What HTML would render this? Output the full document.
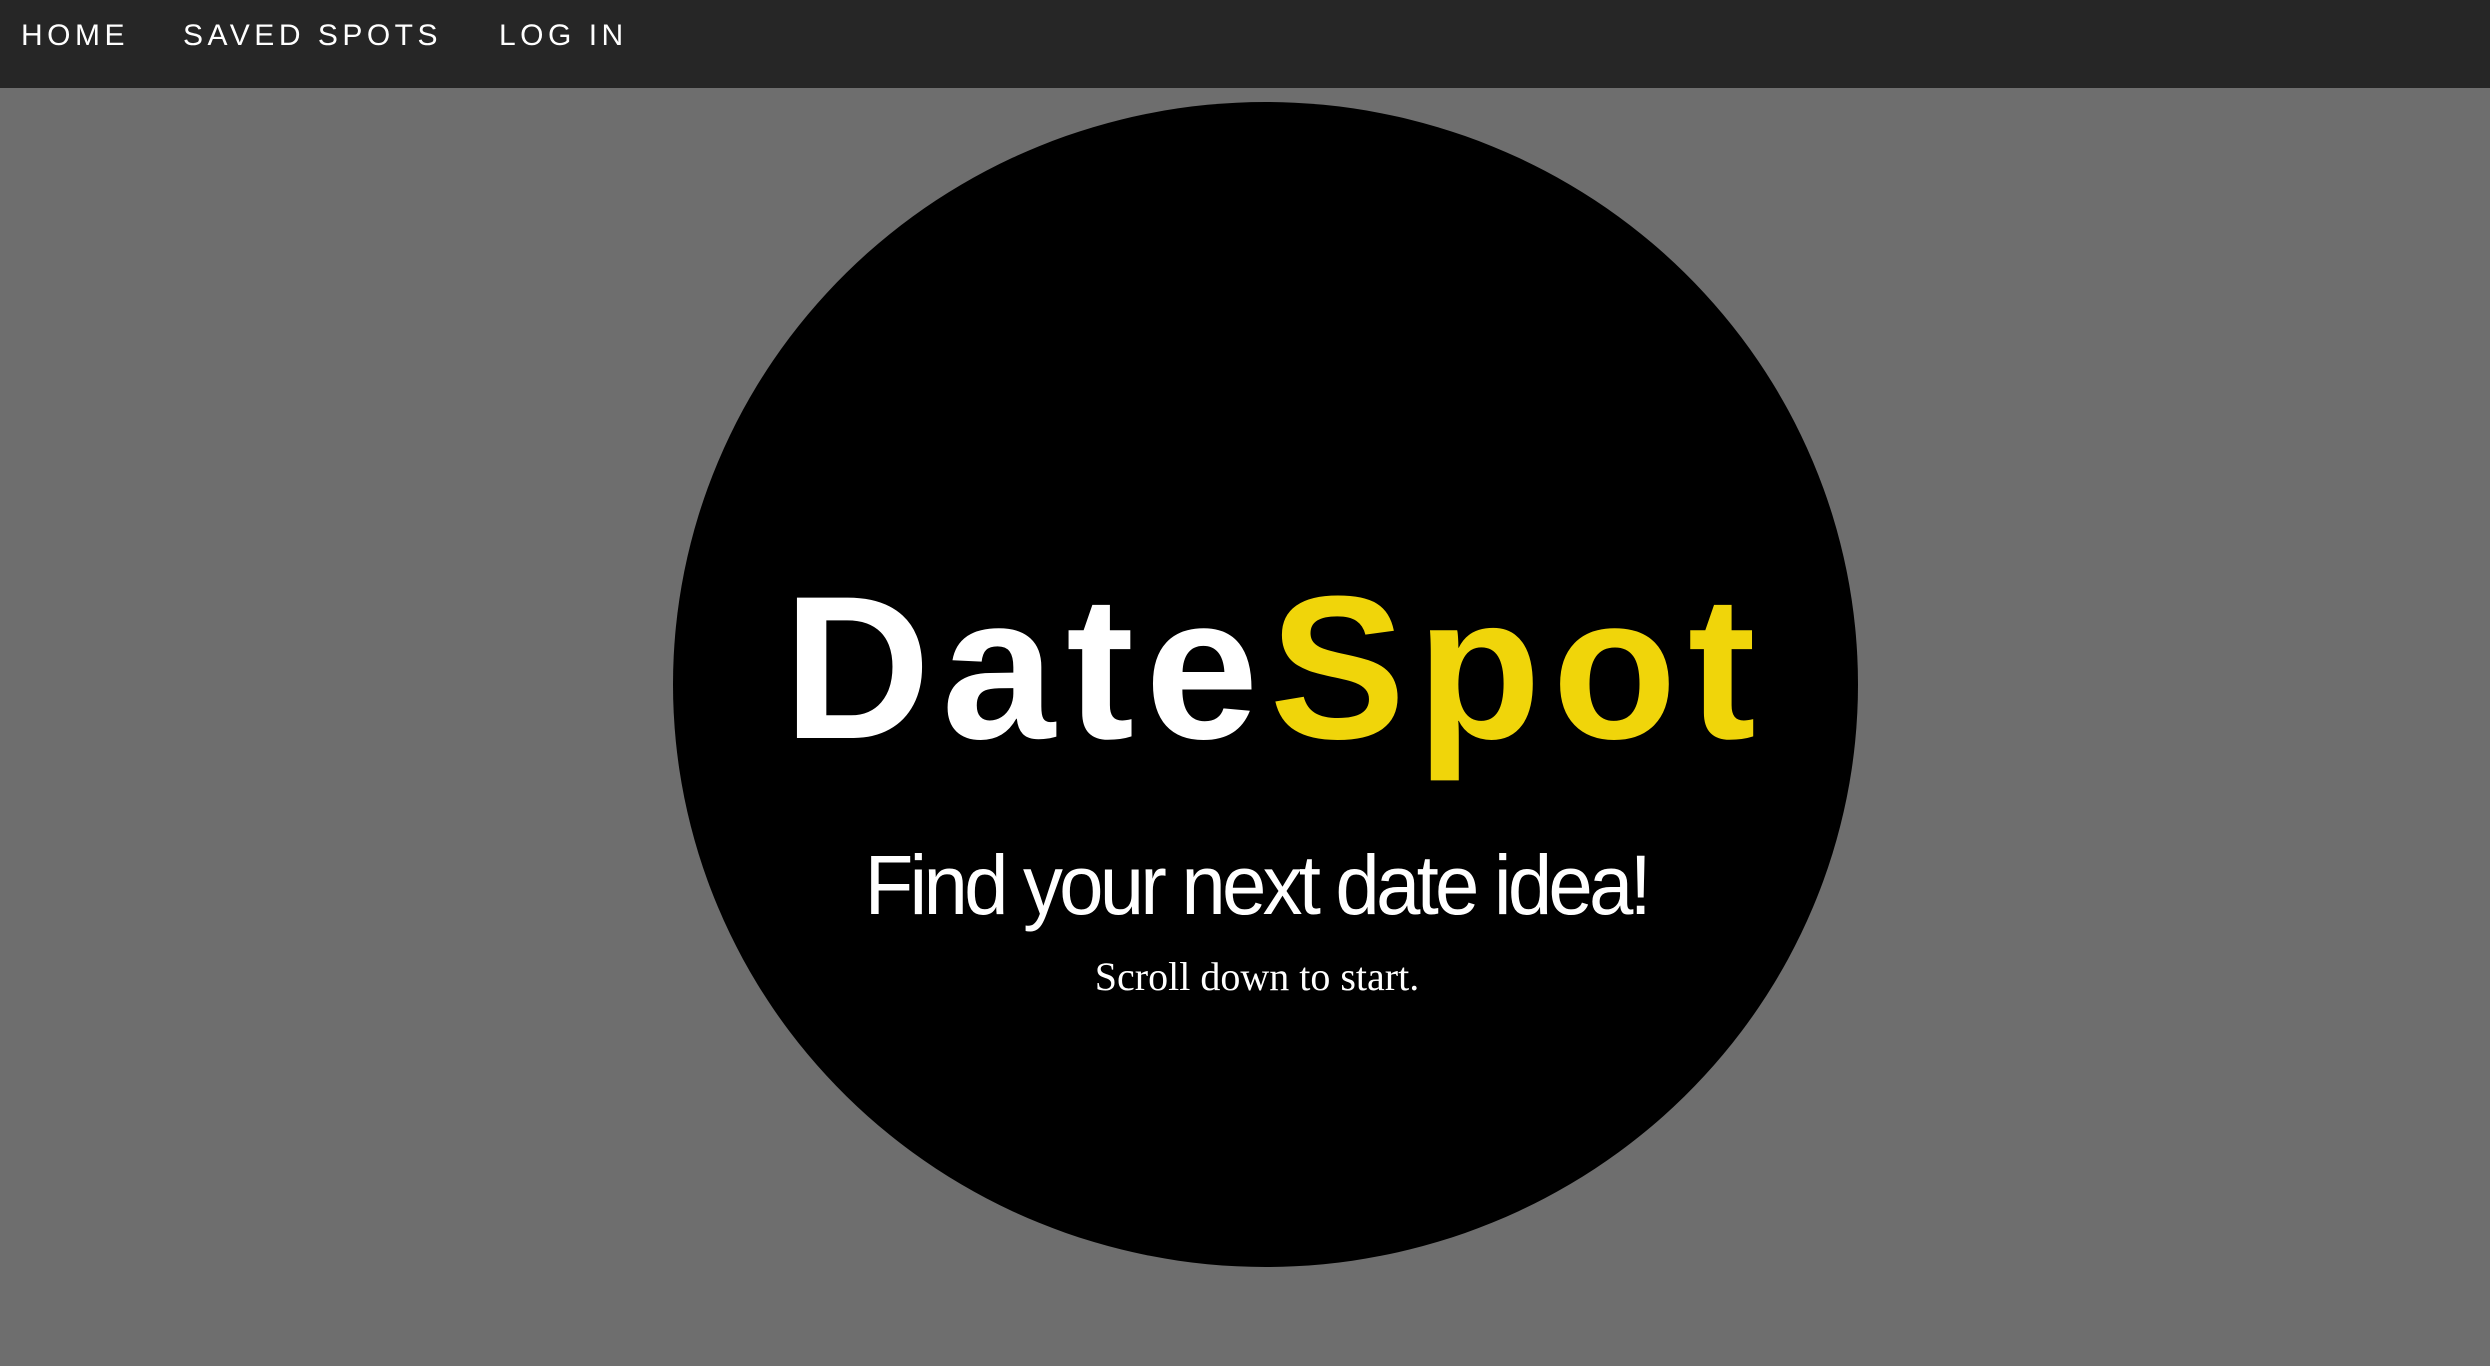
<!DOCTYPE html>
<html><head><style>
html,body{margin:0;padding:0}
body{width:2490px;height:1366px;background:#6e6e6e;position:relative;overflow:hidden;font-family:"Liberation Sans",sans-serif}
nav{position:absolute;left:0;top:0;width:2490px;height:88px;background:#262626}
nav span{position:absolute;top:16px;color:#fff;font-size:30px;letter-spacing:4.5px;line-height:40px}
.c{position:absolute;left:673px;top:102px;width:1185px;height:1165px;border-radius:50%;background:#000}
.t{position:absolute;left:0;width:2490px;text-align:center;white-space:nowrap}
</style></head><body>
<nav><span style="left:21px">HOME</span><span style="left:183px">SAVED SPOTS</span><span style="left:499px">LOG IN</span></nav>
<div class="c"></div>
<div class="t" style="top:548px;left:30px;font-weight:bold;font-size:204px;line-height:240px;letter-spacing:11px"><span style="color:#fff">Date</span><span style="color:#f0d50a">Spot</span></div>
<div class="t" style="top:837px;left:11px;font-size:84px;line-height:96px;color:#fff"><span style="display:inline-block;letter-spacing:-4px;transform:scaleX(0.95)">Find your next date idea!</span></div>
<div class="t" style="top:953px;left:12px;font-family:'Liberation Serif',serif;font-size:40px;line-height:48px;color:#fff">Scroll down to start.</div>
</body></html>
